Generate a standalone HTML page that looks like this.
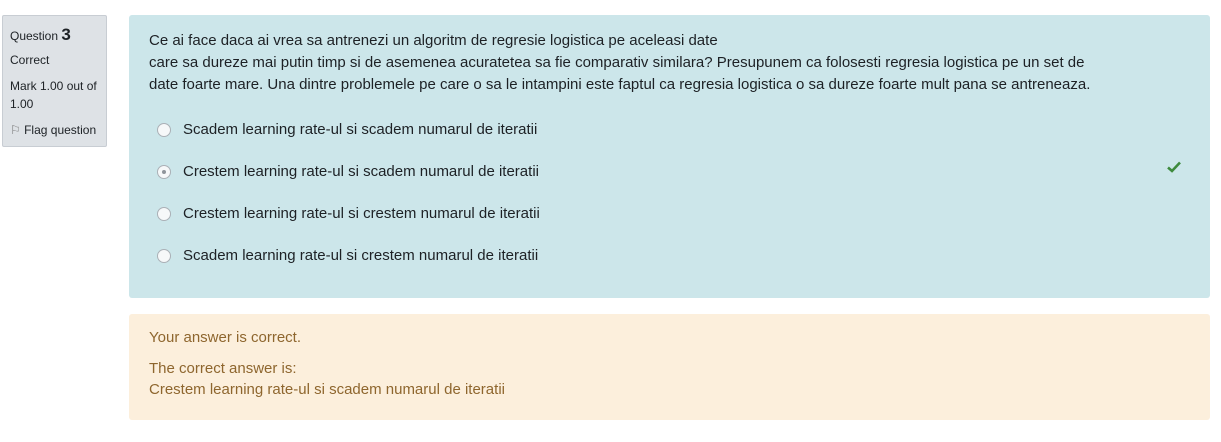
<!DOCTYPE html>
<html><head><style>
body{margin:0;background:#fff;font-family:"Liberation Sans",sans-serif;color:#1d2125;width:1221px;height:442px;overflow:hidden;position:relative}
.side{position:absolute;left:2px;top:15px;width:105px;height:132px;background:#dee2e6;border:1px solid #c8cdd3;border-radius:2px;box-sizing:border-box;padding:10px 7px;font-size:12px;line-height:18px}
.side div{margin-bottom:8px}
.q{position:absolute;left:129px;top:15px;width:1081px;height:283px;background:#cce6ea;border-radius:3px}
.qt{position:absolute;left:20px;top:15px;font-size:15px;line-height:22px;width:1060px}
.opt{position:absolute;left:28px;font-size:15px;height:20px;line-height:20px}
.opt span.r{position:absolute;left:0;top:3px;width:14px;height:14px;border:1px solid #aab0b6;border-radius:50%;background:#f6f8f9;box-sizing:border-box}
.opt span.r.s::after{content:"";position:absolute;left:4px;top:4px;width:4px;height:4px;border-radius:50%;background:#8f959b}
.opt .t{margin-left:26px}
.fb{position:absolute;left:129px;top:314px;width:1081px;height:106px;background:#fcefdc;border-radius:3px;color:#8e662e;font-size:15px}
.fb div{position:absolute;left:20px}
</style></head><body>
<div class="side">
<div style="margin-bottom:6px">Question <b style="font-size:17px">3</b></div>
<div>Correct</div>
<div>Mark 1.00 out of 1.00</div>
<div><span style="color:#777">&#9872;</span> Flag question</div>
</div>
<div class="q">
<div class="qt">Ce ai face daca ai vrea sa antrenezi un algoritm de regresie logistica pe aceleasi date<br>care sa dureze mai putin timp si de asemenea acuratetea sa fie comparativ similara? Presupunem ca folosesti regresia logistica pe un set de<br>date foarte mare. Una dintre problemele pe care o sa le intampini este faptul ca regresia logistica o sa dureze foarte mult pana se antreneaza.</div>
<div class="opt" style="top:105px"><span class="r"></span><span class="t">Scadem learning rate-ul si scadem numarul de iteratii</span></div>
<div class="opt" style="top:147px"><span class="r s"></span><span class="t">Crestem learning rate-ul si scadem numarul de iteratii</span></div>
<div class="opt" style="top:189px"><span class="r"></span><span class="t">Crestem learning rate-ul si crestem numarul de iteratii</span></div>
<div class="opt" style="top:231px"><span class="r"></span><span class="t">Scadem learning rate-ul si crestem numarul de iteratii</span></div>
<svg style="position:absolute;left:1038px;top:146px" width="14" height="12" viewBox="0 0 14 12"><path d="M1 6.5 L5 10 L13 1.5" fill="none" stroke="#3d8a3d" stroke-width="2.6"/></svg>
</div>
<div class="fb">
<div style="top:15px">Your answer is correct.</div>
<div style="top:46px">The correct answer is:</div>
<div style="top:67px">Crestem learning rate-ul si scadem numarul de iteratii</div>
</div>
</body></html>
